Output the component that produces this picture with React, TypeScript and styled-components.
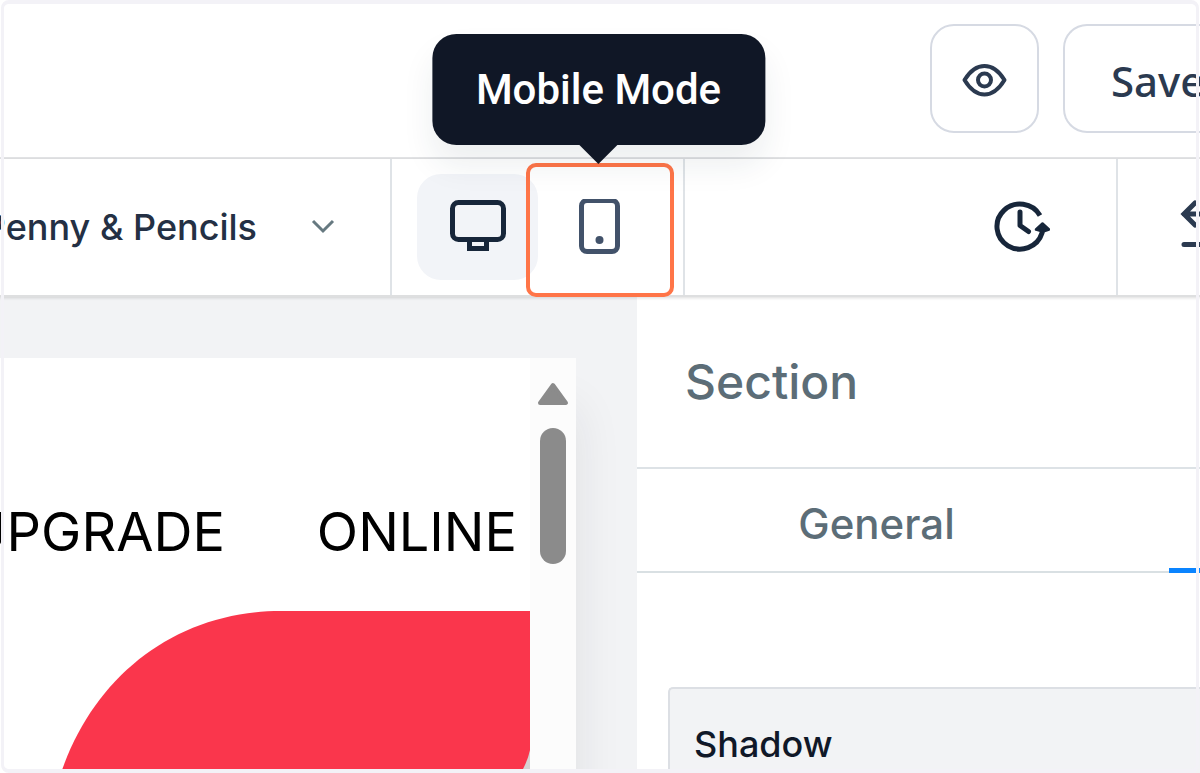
import React from "react";
import styled, { createGlobalStyle } from "styled-components";

const GlobalStyle = createGlobalStyle`
  * { box-sizing: border-box; }
  body { margin: 0; background: #fff; font-family: Inter, "Liberation Sans", sans-serif; }
  button, a { font: inherit; color: inherit; }
  button { border: 0; padding: 0; background: none; cursor: pointer; }
  svg { display: block; flex: none; }
`;

const Shell = styled.div`
  position: relative;
  display: flex;
  flex-direction: column;
  height: 100vh;
  overflow: hidden;
  background: #fff;
`;

const Frame = styled.div`
  position: absolute;
  inset: 0 1px;
  z-index: 5;
  border: solid #f3f2f7;
  border-width: 4px 3px;
  border-radius: 8px;
  pointer-events: none;
`;

const Header = styled.header`
  flex: none;
  display: flex;
  justify-content: flex-end;
  gap: 24px;
  height: 159px;
  padding-top: 24px;
  border-bottom: 2px solid #e2e3e5;
`;

const OutlineButton = styled.button<{ $clipped?: boolean }>`
  display: flex;
  align-items: center;
  justify-content: ${(p) => (p.$clipped ? "flex-start" : "center")};
  flex: none;
  width: ${(p) => (p.$clipped ? 137 : 109)}px;
  height: 109px;
  padding: ${(p) => (p.$clipped ? "4px 0 0 46px" : "2px 0 0")};
  border: 2px solid #d6dae3;
  border-right-width: ${(p) => (p.$clipped ? 0 : 2)}px;
  border-radius: ${(p) => (p.$clipped ? "24px 0 0 24px" : "24px")};
  color: #2b3a50;
  font-family: "Noto Sans", sans-serif;
  font-size: 42px;
  font-weight: 500;
  white-space: nowrap;
`;

const Toolbar = styled.div`
  position: relative;
  z-index: 2;
  flex: none;
  display: flex;
  height: 138px;
  background: #fff;
  border-bottom: 2px solid #dedfe0;
  box-shadow: 0 1px 3px rgba(0, 0, 0, 0.14);
`;

const SiteButton = styled.button`
  flex: none;
  display: flex;
  align-items: center;
  justify-content: flex-end;
  gap: 54px;
  width: 392px;
  padding-right: 55px;
  border-right: 2px solid #dfe3e7;
  color: #243044;
  font-size: 36px;
  font-weight: 500;
  white-space: nowrap;
`;

const Devices = styled.div`
  flex: none;
  display: flex;
  align-items: flex-start;
  width: 293px;
  padding: 4px 0 0 25px;
  border-right: 2px solid #dfe3e7;
`;

const DeviceButton = styled.button<{ $active?: boolean }>`
  display: flex;
  align-items: center;
  justify-content: center;
  width: 121px;
  height: 106px;
  margin-top: 11px;
  border-radius: 24px;
  background: ${(p) => (p.$active ? "#f2f4f8" : "transparent")};
`;

const Target = styled.div`
  position: relative;
`;

const Highlight = styled.span`
  position: absolute;
  inset: 0 -15px 0 -12px;
  height: 134px;
  border: 4px solid #ff7548;
  border-radius: 10px;
  pointer-events: none;
`;

const Tooltip = styled.div`
  position: absolute;
  bottom: 135px;
  left: 50%;
  transform: translateX(-50%);
  padding: 28px 44px;
  border-radius: 24px;
  background: #101726;
  box-shadow: 0 20px 32px rgba(30, 50, 60, 0.08);
  color: #fff;
  font-family: Roboto, sans-serif;
  font-size: 42px;
  font-weight: 500;
  line-height: 55px;
  white-space: nowrap;
  &::after {
    content: "";
    position: absolute;
    top: 100%;
    left: 50%;
    margin-left: -19px;
    border: 19px solid transparent;
    border-top-color: #101726;
    border-bottom: 0;
  }
`;

const History = styled.div`
  flex: 1;
  display: flex;
  align-items: center;
  justify-content: flex-end;
  padding-right: 66px;
  border-right: 2px solid #dfe3e7;
`;

const Undo = styled.div`
  flex: none;
  display: flex;
  align-items: center;
  width: 82px;
  padding-left: 62px;
  overflow: hidden;
`;

const Workspace = styled.main`
  flex: 1;
  min-height: 0;
  display: flex;
`;

const Canvas = styled.section`
  flex: none;
  width: 637px;
  padding: 61px 61px 0 0;
  background: #f2f3f5;
  overflow: hidden;
`;

const Page = styled.div`
  display: flex;
  height: 100%;
  background: #fff;
  box-shadow: 0 50px 45px rgba(30, 34, 44, 0.09);
`;

const PageBody = styled.div`
  flex: 1;
  min-width: 0;
  display: flex;
  flex-direction: column;
  overflow: hidden;
`;

const PageNav = styled.nav`
  flex: none;
  display: flex;
  align-items: flex-start;
  justify-content: flex-end;
  gap: 92px;
  height: 252px;
  padding: 144px 13px 0 0;
  line-height: 60px;
  a { color: #000; font-size: 54px; text-decoration: none; }
`;

const Hero = styled.svg`
  width: 530px;
`;

const Scrollbar = styled.div`
  flex: none;
  display: flex;
  flex-direction: column;
  align-items: center;
  gap: 22px;
  width: 46px;
  padding-top: 24px;
  background: #fcfcfc;
`;

const Thumb = styled.div`
  width: 26px;
  height: 136px;
  border-radius: 13px;
  background: #8b8b8b;
`;

const Panel = styled.aside`
  flex: 1;
  min-width: 0;
  display: flex;
  flex-direction: column;
  background: #fff;
  overflow: hidden;
`;

const PanelTitle = styled.h2`
  flex: none;
  display: flex;
  align-items: center;
  height: 172px;
  margin: 0;
  padding: 0 0 2px 48px;
  border-bottom: 2px solid #dde2e6;
  color: #5c6d77;
  font-size: 48px;
  font-weight: 500;
`;

const Tabs = styled.div`
  flex: none;
  display: flex;
  height: 104px;
  border-bottom: 2px solid #d9e0e3;
`;

const Tab = styled.button<{ $active?: boolean }>`
  flex: none;
  width: ${(p) => (p.$active ? 478 : 532)}px;
  height: 104px;
  padding: ${(p) => (p.$active ? "0" : "4px 53px 0 0")};
  border-bottom: ${(p) => (p.$active ? "5px solid #0a84ff" : "0")};
  color: #5c6d77;
  font-size: 42px;
  font-weight: 500;
`;

const Group = styled.section`
  flex: 1;
  min-height: 0;
  margin: 114px 0 0 31px;
  padding: 33px 24px 0;
  border: solid #dcdfe4;
  border-width: 2px 0 0 2px;
  border-radius: 5px 0 0 0;
  background: #f2f3f5;
  overflow: hidden;
  h3 { margin: 0; color: #101828; font-size: 36px; line-height: 44px; font-weight: 500; }
`;

export default function App() {
  return (
    <Shell>
      <GlobalStyle />
      <Header>
        <OutlineButton aria-label="Preview">
          <svg width="46" height="36" viewBox="0 0 46 36" fill="none" stroke="#2b3a50" strokeWidth="4">
            <path d="M2.500 18C8 9 15 4 22.500 4S37 9 42.500 18C37 27 30 32.500 22.500 32.500S8 27 2.500 18Z" strokeLinejoin="round" />
            <circle cx="22.500" cy="18" r="6.500" />
          </svg>
        </OutlineButton>
        <OutlineButton $clipped>Save</OutlineButton>
      </Header>
      <Toolbar>
        <SiteButton>
          Penny &amp; Pencils
          <svg width="24" height="16" viewBox="0 0 24 16" fill="none" stroke="#667980" strokeWidth="3">
            <path d="M2 2l10 10L22 2" />
          </svg>
        </SiteButton>
        <Devices>
          <DeviceButton $active aria-label="Desktop mode">
            <svg width="56" height="54" viewBox="0 0 56 54" fill="none" stroke="#17263a" strokeWidth="5">
              <rect x="2.500" y="2.500" width="51" height="37" rx="6" />
              <path d="M19.500 40v8.500h17V40" />
            </svg>
          </DeviceButton>
          <Target>
            <DeviceButton aria-label="Mobile mode">
              <svg width="42" height="56" viewBox="0 0 42 56" fill="none" stroke="#42526a" strokeWidth="5">
                <rect x="3.500" y="1.500" width="36" height="51" rx="5.500" />
                <circle cx="21.500" cy="41" r="4" fill="#42526a" stroke="none" />
              </svg>
            </DeviceButton>
            <Highlight />
            <Tooltip role="tooltip">Mobile Mode</Tooltip>
          </Target>
        </Devices>
        <History>
          <button aria-label="Version history">
            <svg width="56" height="54" viewBox="0 0 56 54" fill="none" stroke="#17263a" strokeWidth="5" strokeLinejoin="round">
              <path d="M46 15.500A23 22.500 0 1 0 48 33L49 28" />
              <path d="M26 12v13.500l8.500 6" strokeLinecap="round" />
              <path d="M42 29.500l6.500-6 6.500 6-6 2z" fill="#17263a" strokeWidth="2.500" />
            </svg>
          </button>
        </History>
        <Undo>
          <button aria-label="Undo">
            <svg width="56" height="54" viewBox="0 0 56 54" fill="none" stroke="#2b3a50" strokeWidth="5" strokeLinecap="round">
              <path d="M15 3L4 14l11 11M4 14h46M4 44.500h48" />
            </svg>
          </button>
        </Undo>
      </Toolbar>
      <Workspace>
        <Canvas>
          <Page>
            <PageBody>
              <PageNav>
                <a href="#upgrade">UPGRADE</a>
                <a href="#online">ONLINE</a>
              </PageNav>
              <Hero height="163" viewBox="0 0 530 163" aria-hidden="true">
                <path d="M500 163L530 120V163Z" fill="#d6d3d3" />
                <path d="M61 163C94 65 177 1 281 1H530V140Q528 150 521 163Z" fill="#fa364c" />
              </Hero>
            </PageBody>
            <Scrollbar>
              <svg width="32" height="24" viewBox="0 0 32 24" fill="#8b8b8b" stroke="#8b8b8b" strokeWidth="4" strokeLinejoin="round">
                <path d="M16 3L29 21H3Z" />
              </svg>
              <Thumb />
            </Scrollbar>
          </Page>
        </Canvas>
        <Panel>
          <PanelTitle>Section</PanelTitle>
          <Tabs>
            <Tab>General</Tab>
            <Tab $active aria-label="Design" />
          </Tabs>
          <Group>
            <h3>Shadow</h3>
          </Group>
        </Panel>
      </Workspace>
      <Frame />
    </Shell>
  );
}
